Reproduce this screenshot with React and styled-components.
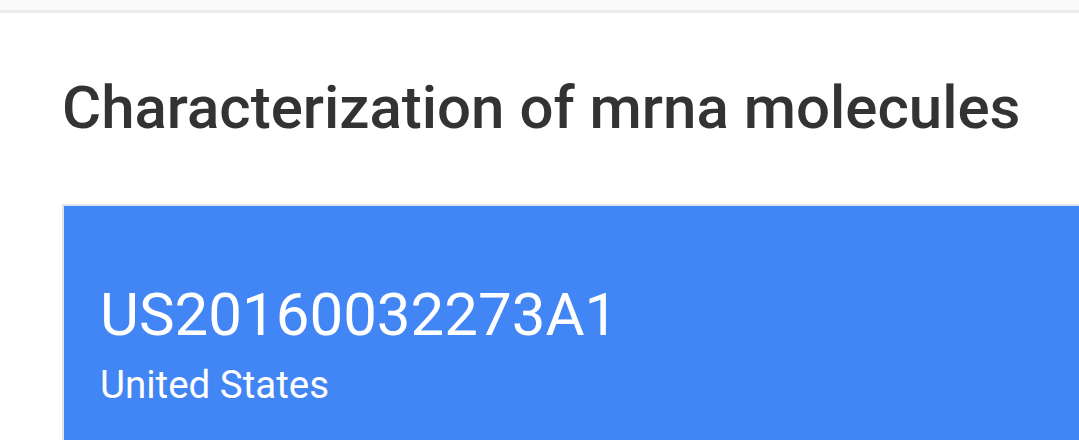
import React from "react";
import styled, { createGlobalStyle } from "styled-components";

const Global = createGlobalStyle`
  html, body { margin: 0; padding: 0; background: #ffffff; }
  body { font-family: Roboto, "Noto Sans", sans-serif; overflow: hidden; }
`;

const Page = styled.div`
  width: 1079px;
  height: 440px;
  display: flex;
  flex-direction: column;
  overflow: hidden;
`;

const TopBar = styled.div`
  height: 10px;
  background: #fafafa;
  border-bottom: 3px solid #ebebeb;
  flex-shrink: 0;
`;

const Content = styled.div`
  padding: 60px 0 0 62px;
  display: flex;
  flex-direction: column;
`;

const Title = styled.h1`
  margin: 0;
  font-family: Roboto, sans-serif;
  font-weight: 500;
  font-size: 60px;
  line-height: 70px;
  color: #333333;
  white-space: nowrap;
`;

const Card = styled.div`
  margin-top: 61px;
  margin-right: -40px;
  background: #4285f4;
  border-top: 2px solid #dfe3ea;
  border-left: 2px solid #dfe3ea;
  padding: 74px 36px 40px 36px;
  color: #ffffff;
  display: flex;
  flex-direction: column;
`;

const Number = styled.div`
  font-family: Roboto, sans-serif;
  font-weight: 400;
  font-size: 60px;
  line-height: 70px;
`;

const Country = styled.div`
  font-family: Roboto, sans-serif;
  font-weight: 400;
  font-size: 38.5px;
  line-height: 44px;
  margin-top: 13px;
`;

export default function App() {
  return (
    <Page>
      <Global />
      <TopBar />
      <Content>
        <Title>Characterization of mrna molecules</Title>
        <Card>
          <Number>US20160032273A1</Number>
          <Country>United States</Country>
        </Card>
      </Content>
    </Page>
  );
}
